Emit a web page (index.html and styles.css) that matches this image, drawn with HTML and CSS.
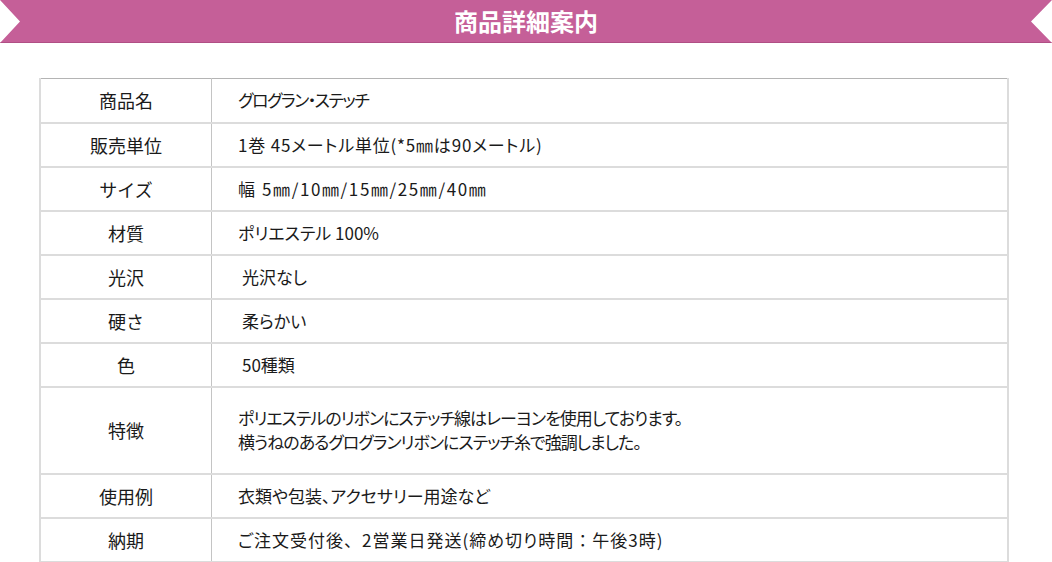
FILE: index.html
```html
<!DOCTYPE html>
<html lang="ja">
<head>
<meta charset="utf-8">
<title>商品詳細案内</title>
<link rel="stylesheet" href="styles.css">
</head>
<body>
<div class="banner"><h1 class="banner-title">商品詳細案内</h1></div>
<table class="spec">
  <tr><th>商品名</th><td class="tighter">グログラン・ステッチ</td></tr>
  <tr><th>販売単位</th><td class="loose">1巻 45メートル単位(*5<span class="fw">㎜</span>は90メートル)</td></tr>
  <tr><th>サイズ</th><td class="nopalt">幅 5㎜/10㎜/15㎜/25㎜/40㎜</td></tr>
  <tr><th>材質</th><td>ポリエステル 100%</td></tr>
  <tr><th>光沢</th><td class="indent">光沢なし</td></tr>
  <tr><th>硬さ</th><td class="indent">柔らかい</td></tr>
  <tr><th>色</th><td class="indent">50種類</td></tr>
  <tr class="tall"><th>特徴</th><td class="tight">ポリエステルのリボンにステッチ線はレーヨンを使用しております。<br>横うねのあるグログランリボンにステッチ糸で強調しました。</td></tr>
  <tr><th>使用例</th><td>衣類や包装、アクセサリー用途など</td></tr>
  <tr><th>納期</th><td class="wide">ご注文受付後<span class="fw">、</span>2営業日発送(締め切り時間<span class="fw">：</span>午後3時)</td></tr>
</table>
</body>
</html>
```
FILE: styles.css
```css
html, body {
  margin: 0;
  padding: 0;
  background: #fff;
}
body {
  font-family: "Noto Sans CJK JP", "Noto Sans", sans-serif;
  color: #1a1a1a;
}
.banner {
  height: 42px;
  background: #c55f98;
  border-bottom: 1px solid #b04f85;
  display: flex;
  align-items: center;
  justify-content: center;
  clip-path: polygon(0 0, 100% 0, calc(100% - 21px) 50%, 100% 100%, 0 100%, 20px 50%);
}
.banner-title {
  margin: 0;
  color: #fff;
  font-size: 24px;
  font-weight: 700;
  line-height: 1;
}
.spec {
  margin: 35px 0 0 39px;
  width: 970px;
  border-collapse: collapse;
  border-left: 2px solid #dcdcdc;
  border-right: 2px solid #dcdcdc;
  border-top: 1px solid #b4b4b4;
}
.spec tr {
  height: 44px;
  border-bottom: 2px solid #dcdcdc;
}
.spec tr.tall {
  height: 87px;
}
.spec th {
  width: 170px;
  padding: 0;
  font-weight: 400;
  font-size: 18px;
  text-align: center;
  border-right: 1px solid #c4c4c4;
}
.spec td {
  padding: 0 0 0 26px;
  font-size: 17px;
  line-height: 24px;
  text-align: left;
  font-feature-settings: "palt";
}
.spec td.indent {
  padding-left: 30px;
}
.spec td.tight {
  letter-spacing: -1px;
}
.spec td.tighter {
  letter-spacing: -1.5px;
}
.spec td.loose {
  letter-spacing: 0.8px;
}
.spec td.wide {
  letter-spacing: 1px;
}
.spec td.nopalt {
  letter-spacing: 1.6px;
}
.spec td.nopalt,
.fw {
  font-feature-settings: normal;
}
```
